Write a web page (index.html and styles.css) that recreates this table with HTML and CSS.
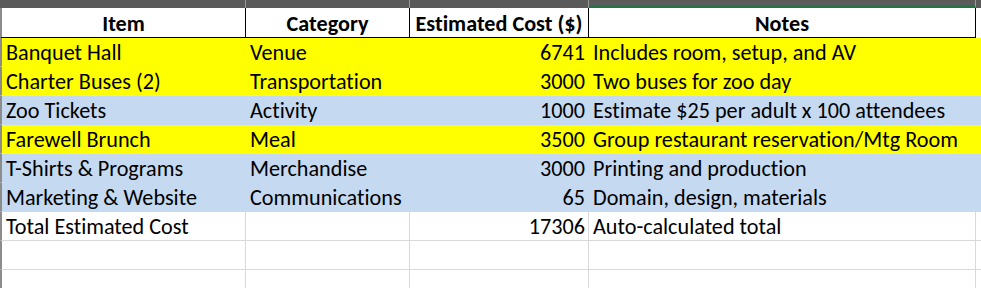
FILE: index.html
```html
<!DOCTYPE html>
<html lang="en">
<head>
<meta charset="utf-8">
<title>Event Budget</title>
<link rel="stylesheet" href="styles.css">
</head>
<body>
<div class="sheet">
  <div class="topbar">
    <div class="tb"></div>
    <div class="tb"></div>
    <div class="tb"></div>
    <div class="tb tb-active"></div>
    <div class="tb tb-last"></div>
  </div>
  <div class="grid">
    <div class="cell hd">Item</div>
    <div class="cell hd">Category</div>
    <div class="cell hd">Estimated Cost ($)</div>
    <div class="cell hd">Notes</div>
    <div class="cell hd-end"></div>

    <div class="cell y">Banquet Hall</div>
    <div class="cell y">Venue</div>
    <div class="cell y num">6741</div>
    <div class="cell y">Includes room, setup, and AV</div>
    <div class="cell y"></div>

    <div class="cell y">Charter Buses (2)</div>
    <div class="cell y">Transportation</div>
    <div class="cell y num">3000</div>
    <div class="cell y">Two buses for zoo day</div>
    <div class="cell y"></div>

    <div class="cell b">Zoo Tickets</div>
    <div class="cell b">Activity</div>
    <div class="cell b num">1000</div>
    <div class="cell b">Estimate $25 per adult x 100 attendees</div>
    <div class="cell b"></div>

    <div class="cell y">Farewell Brunch</div>
    <div class="cell y">Meal</div>
    <div class="cell y num">3500</div>
    <div class="cell y">Group restaurant reservation/Mtg Room</div>
    <div class="cell y"></div>

    <div class="cell b">T-Shirts &amp; Programs</div>
    <div class="cell b">Merchandise</div>
    <div class="cell b num">3000</div>
    <div class="cell b">Printing and production</div>
    <div class="cell b"></div>

    <div class="cell b">Marketing &amp; Website</div>
    <div class="cell b">Communications</div>
    <div class="cell b num">65</div>
    <div class="cell b">Domain, design, materials</div>
    <div class="cell b"></div>

    <div class="cell w">Total Estimated Cost</div>
    <div class="cell w"></div>
    <div class="cell w num">17306</div>
    <div class="cell w">Auto-calculated total</div>
    <div class="cell w last"></div>

    <div class="cell w"></div>
    <div class="cell w"></div>
    <div class="cell w"></div>
    <div class="cell w"></div>
    <div class="cell w last"></div>

    <div class="cell w"></div>
    <div class="cell w"></div>
    <div class="cell w"></div>
    <div class="cell w"></div>
    <div class="cell w last"></div>
  </div>
</div>
</body>
</html>
```
FILE: styles.css
```css
html, body {
  margin: 0;
  padding: 0;
  background: #ffffff;
}

.sheet {
  width: 981px;
  height: 288px;
  overflow: hidden;
  font-family: "Carlito", "Lato", "Liberation Sans", sans-serif;
  font-size: 22.2px;
  color: #000000;
  font-variant-ligatures: none;
}

.topbar {
  display: grid;
  grid-template-columns: 246px 164px 179px 387px 5px;
  height: 8px;
  background: #5a5a5a;
}

.tb {
  box-sizing: border-box;
  height: 8px;
  border-right: 1px solid #9a9a9a;
}

.tb-active {
  border-bottom: 2px solid #217346;
}

.tb-last {
  border-right: none;
}

.grid {
  display: grid;
  grid-template-columns: 246px 164px 179px 387px 5px;
  grid-template-rows: 30px;
  grid-auto-rows: 29px;
}

.cell {
  box-sizing: border-box;
  display: flex;
  align-items: flex-end;
  padding: 0 4px 2px 4px;
  white-space: nowrap;
  overflow: hidden;
  border-right: 1px solid transparent;
  border-bottom: 1px solid transparent;
  line-height: 22px;
}

.grid > .cell:nth-child(5n+1) {
  border-left: 2px solid #8c8c8c;
}

.hd {
  font-weight: bold;
  justify-content: center;
  border-right: 1px solid #000000;
  border-bottom: 1px solid #000000;
  background: #ffffff;
  height: 30px;
}

.hd-end {
  border-bottom: none;
  border-right: none;
  background: #ffffff;
  height: 30px;
}

.y {
  background: #ffff00;
}

.b {
  background: #c5d9f1;
}

.w {
  background: #ffffff;
  border-right-color: #d9d9d9;
  border-bottom-color: #d9d9d9;
}

.w.last {
  border-right: none;
}

.num {
  justify-content: flex-end;
  padding-right: 3px;
}
```
